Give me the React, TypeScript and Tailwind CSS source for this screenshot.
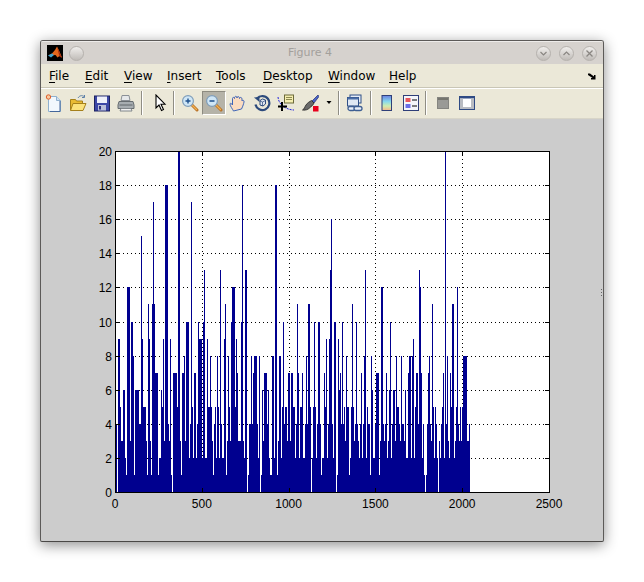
import type { ReactNode } from "react";

const menus = ["File", "Edit", "View", "Insert", "Tools", "Desktop", "Window", "Help"];
const menuWidths = [36, 39, 43, 49, 47, 65, 61, 40];

// one char per pixel column, base 36 bar height, starting at x=115
const levels =
  "4409953366" + "21ccc3aa81" + "666644f955" + "531b931bhb" + "7771226593" + "iii4391077" +
  "775kk31778" + "3aaa24h527" + "724a9992ad" + "2295585314" + "52852d4229" + "b13853accc" +
  "597333ai32" + "dd01448478" + "8842801637" + "7746211882" + "ii138825a4" + "5537737755" +
  "24b7255722" + "484bb5025a" + "524aa41227" + "59249dg42a" + "a019674a45" + "3855125b53" +
  "4a43247248" + "d254418622" + "477713cc43" + "47236a2466" + "3855438443" + "6227882892" +
  "5774dc7241" + "0147843b52" + "5420324572" + "k483275bb2" + "35c4353588883 34".replace(" ", "");

const AX = { l: 115, r: 549, t: 150, b: 491 };
const yOf = (v: number) => AX.b - (v * (AX.b - AX.t)) / 20;
const xOf = (v: number) => AX.l + (v * (AX.r - AX.l)) / 2500;

function Plot() {
  const yTicks = [0, 2, 4, 6, 8, 10, 12, 14, 16, 18, 20];
  const xTicks = [0, 500, 1000, 1500, 2000, 2500];
  let bars = "";
  levels.split("").forEach((c, i) => {
    const h = parseInt(c, 36);
    if (h > 0) bars += `M${AX.l + i} ${AX.b}V${Math.round(yOf(h))}h1V${AX.b}z`;
  });
  return (
    <svg viewBox="41 118 562 423" className="block h-[423px] w-[562px]" shapeRendering="crispEdges">
      <rect x={AX.l} y={AX.t} width={AX.r - AX.l} height={AX.b - AX.t} fill="#fff" />
      {yTicks.slice(1, -1).map((v) => (
        <line key={v} x1={AX.l} x2={AX.r} y1={Math.round(yOf(v)) + 0.5} y2={Math.round(yOf(v)) + 0.5} stroke="#000" strokeDasharray="1 3" />
      ))}
      {xTicks.slice(1, -1).map((v) => (
        <line key={v} y1={AX.t} y2={AX.b} x1={Math.round(xOf(v)) + 0.5} x2={Math.round(xOf(v)) + 0.5} stroke="#000" strokeDasharray="1 3" />
      ))}
      <path d={bars} fill="#00008f" />
      <rect x={AX.l + 0.5} y={AX.t + 0.5} width={AX.r - AX.l} height={AX.b - AX.t} fill="none" stroke="#000" />
      {yTicks.map((v) => (
        <g key={v}>
          <line x1={AX.l} x2={AX.l + 5} y1={Math.round(yOf(v)) + 0.5} y2={Math.round(yOf(v)) + 0.5} stroke="#000" />
          <line x1={AX.r - 4} x2={AX.r} y1={Math.round(yOf(v)) + 0.5} y2={Math.round(yOf(v)) + 0.5} stroke="#000" />
          <text x={112} y={Math.round(yOf(v)) + 5} textAnchor="end" fontSize={12} fill="#000" className="font-['Liberation_Sans',sans-serif]">
            {v}
          </text>
        </g>
      ))}
      {xTicks.map((v) => (
        <g key={v}>
          <line y1={AX.b} y2={AX.b - 4} x1={Math.round(xOf(v)) + 0.5} x2={Math.round(xOf(v)) + 0.5} stroke="#000" />
          <line y1={AX.t} y2={AX.t + 5} x1={Math.round(xOf(v)) + 0.5} x2={Math.round(xOf(v)) + 0.5} stroke="#000" />
          <text x={xOf(v)} y={507} textAnchor="middle" fontSize={12} fill="#000" className="font-['Liberation_Sans',sans-serif]">
            {v}
          </text>
        </g>
      ))}
      <path d="M601 288h1v1h-1zM601 291h1v1h-1zM601 294h1v1h-1z" fill="#666" />
    </svg>
  );
}

function Ico({ children }: { children: ReactNode }) {
  return (
    <svg viewBox="0 0 18 18" className="h-[18px] w-[18px]">
      {children}
    </svg>
  );
}

function Btn({ children, active }: { children: ReactNode; active?: boolean }) {
  return (
    <div
      className={
        active
          ? "flex h-6 w-6 items-center justify-center border border-[#8d8b80] border-r-white border-b-white bg-[#b5b3a8]"
          : "flex h-6 w-6 items-center justify-center"
      }
    >
      {children}
    </div>
  );
}

function Sep({ ml, mr }: { ml: string; mr: string }) {
  return <div className={`h-6 w-[1px] bg-[#8f8d84] shadow-[1px_0_0_#fff] ${ml} ${mr}`} />;
}

const Magnifier = ({ plus }: { plus?: boolean }) => (
  <Ico>
    <path d="M10.5 10.5l5.5 5.5" stroke="#b9742a" strokeWidth="3" strokeLinecap="round" />
    <path d="M11 11l4.5 4.5" stroke="#f4b04e" strokeWidth="1.2" strokeLinecap="round" />
    <circle cx="7" cy="7" r="5.4" fill="#cfe6f6" stroke="#7f9db9" strokeWidth="1.2" />
    <path d={plus ? "M4.5 7h5M7 4.5v5" : "M4.5 7h5"} stroke="#1d4f8c" strokeWidth="1.4" />
  </Ico>
);

function Toolbar() {
  return (
    <div className="flex h-[29px] items-center border-t border-t-white bg-[#ebe8d8] pl-[1px]">
      <Btn>
        <Ico>
          <path d="M3.5 2.5h8l4 4v11h-12z" fill="#f2f8fd" stroke="#8fb0cf" />
          <path d="M11.5 2.5v4h4" fill="#cfe0ef" stroke="#8fb0cf" />
          <path d="M15 7v10.500H5" fill="none" stroke="#45679a" />
          <circle cx="3.500" cy="3" r="2.200" fill="#f7c9a0" stroke="#e0602a" />
        </Ico>
      </Btn>
      <Btn>
        <Ico>
          <path d="M1.500 5.500h5l1 1.500h6v9h-12z" fill="#e9bb33" stroke="#a5801a" />
          <path d="M1.500 16.500l2.500-7h13l-3 7z" fill="#fbe27c" stroke="#a5801a" />
          <path d="M9 4c1.500-2.500 4-3 6-1.500M15.500 1v2.500h-2.500" fill="none" stroke="#5b7fa8" />
        </Ico>
      </Btn>
      <Btn>
        <Ico>
          <rect x="1.500" y="2" width="15" height="15" fill="#3c47a6" stroke="#1d2260" />
          <rect x="4" y="2.500" width="10" height="6.500" fill="#eef0fa" />
          <rect x="5" y="11" width="8" height="5.500" fill="#b9bed9" />
          <rect x="6" y="12" width="2" height="3.500" fill="#2a3080" />
        </Ico>
      </Btn>
      <Btn>
        <Ico>
          <path d="M5 1.500h7l1 5h-9z" fill="#e6e8ea" stroke="#8b9096" />
          <path d="M2 7.500h14l1 3.500v3.500h-16v-3.500z" fill="#a7adb1" stroke="#666c70" />
          <path d="M4 14.500h10l1 2.500h-12z" fill="#f2f2f2" stroke="#80868a" />
          <path d="M2.500 11h13" stroke="#60666a" />
        </Ico>
      </Btn>
      <Sep ml="ml-[3px]" mr="mr-[6px]" />
      <Btn>
        <Ico>
          <path d="M5 1v13l3-3 2.500 5.500 2-1-2.500-5.300h4z" fill="#fff" stroke="#000" strokeWidth="1.100" />
        </Ico>
      </Btn>
      <Sep ml="ml-[1px]" mr="mr-[4px]" />
      <Btn>
        <Magnifier plus />
      </Btn>
      <Btn active>
        <Magnifier />
      </Btn>
      <Btn>
        <Ico>
          <path
            d="M4.500 17c-1-2-3.500-5-3.500-7 0-1 1.500-1 2.500 1V4.500c0-1.500 2-1.500 2 0-.3-2.500 2.500-3 2.500-.5 0-2 2.500-2 2.500.5 0-1.500 2.500-1.500 2.500.5v2c.5-1 2.500-1 2 1-.3 1.500-1 4-2.500 7z"
            fill="#fbdcc0"
            stroke="#3f66b8"
            strokeWidth="1"
          />
        </Ico>
      </Btn>
      <Btn>
        <Ico>
          <path d="M4 4.500a7 7 0 1 1-1.500 6" fill="none" stroke="#2c4a7c" strokeWidth="2.200" />
          <path d="M1 3.500l5.500-.5v5z" fill="#2c4a7c" />
          <path d="M7 6.500l2.500-1.500 3 1v4l-2.500 2-3-1z" fill="#dfe6f0" stroke="#2c4a7c" />
          <path d="M9.500 8v4M9.500 8l3-1.500M9.500 8l-2.500-1" stroke="#2c4a7c" strokeWidth=".7" fill="none" />
        </Ico>
      </Btn>
      <Btn>
        <Ico>
          <rect x="7.500" y="1" width="9" height="8" fill="#f5eeb0" stroke="#6d6a3a" />
          <path d="M9 3.500h6M9 5.500h6" stroke="#8d8a50" />
          <path d="M1 3c.5 4 2 8 8 11 3 1.500 6 2 8 2" fill="none" stroke="#2222dd" strokeDasharray="2 1" />
          <path d="M5 8v9M1 12.500h9" stroke="#000" strokeWidth="2" />
        </Ico>
      </Btn>
      <Btn>
        <Ico>
          <path d="M17 1l-6 6 2 2 5-6.500z" fill="#4a63c8" stroke="#22306f" strokeWidth=".7" />
          <path d="M10.500 6.500L13 9c-1 2.500-3 3.500-4.500 5-1.500 1.500-4 2.500-7 2 2-1 2-3 3.500-5 1.500-2.500 4-3.500 5.500-4.500z" fill="#6a6a6a" stroke="#222" strokeWidth=".8" />
          <rect x="12" y="12" width="5.500" height="5.500" fill="#e8001c" />
        </Ico>
      </Btn>
      <svg viewBox="0 0 10 6" className="ml-[2px] mr-[4px] h-[6px] w-[10px]">
        <path d="M2.500 1h5l-2.500 3z" fill="#000" />
      </svg>
      <Sep ml="ml-0" mr="mr-[4px]" />
      <Btn>
        <Ico>
          <rect x="4" y="1" width="11" height="8" fill="#e6edf6" stroke="#2f4f86" />
          <rect x="1.500" y="3.500" width="11" height="8.500" fill="#dfe8f3" stroke="#2f4f86" />
          <rect x="1.500" y="3.500" width="11" height="2" fill="#4a6ea8" />
          <rect x="2" y="12.500" width="7" height="4" rx="2" fill="#e8eef6" stroke="#3e5f92" strokeWidth="1.300" />
          <rect x="8" y="12.500" width="8" height="4" rx="2" fill="#e8eef6" stroke="#3e5f92" strokeWidth="1.300" />
        </Ico>
      </Btn>
      <Sep ml="ml-[3px]" mr="mr-[4px]" />
      <Btn>
        <Ico>
          <defs>
            <linearGradient id="cbar" x1="0" y1="0" x2="0" y2="1">
              <stop offset="0" stopColor="#6a7fe0" />
              <stop offset=".4" stopColor="#86d8ee" />
              <stop offset=".7" stopColor="#cfeeb0" />
              <stop offset="1" stopColor="#f6b48c" />
            </linearGradient>
          </defs>
          <rect x="4" y="1.500" width="9.500" height="15" fill="url(#cbar)" stroke="#2f3f78" />
        </Ico>
      </Btn>
      <Btn>
        <Ico>
          <rect x="1.500" y="1.500" width="15" height="15" fill="#f4f6fa" stroke="#2f3f78" />
          <rect x="3.500" y="4" width="5" height="4" fill="#e8585c" />
          <rect x="3.500" y="10" width="5" height="4" fill="#6a6fe8" />
          <path d="M10 6h5M10 12h5" stroke="#000" />
        </Ico>
      </Btn>
      <Sep ml="ml-[2px]" mr="mr-[5px]" />
      <Btn>
        <Ico>
          <rect x="3.500" y="3.500" width="11" height="11" fill="#9a9a96" stroke="#858580" />
          <rect x="4" y="4" width="10" height="2" fill="#75756f" />
        </Ico>
      </Btn>
      <Btn>
        <Ico>
          <rect x="1.500" y="2.500" width="15" height="13" fill="#fff" stroke="#2f4a84" />
          <rect x="1.500" y="2.500" width="15" height="2" fill="#2f4a84" />
          <rect x="2" y="4.500" width="3" height="10.500" fill="#b9bcc2" />
          <rect x="13" y="4.500" width="3" height="10.500" fill="#b9bcc2" />
          <rect x="2" y="13" width="14" height="2" fill="#b9bcc2" />
        </Ico>
      </Btn>
    </div>
  );
}

function WinBtn({ children }: { children?: ReactNode }) {
  return (
    <div className="flex h-[15px] w-[15px] items-center justify-center rounded-full border border-[#b5b1ad] bg-gradient-to-b from-[#f0eeec] to-[#c0bcb8]">
      {children && (
        <svg viewBox="0 0 9 9" className="h-[9px] w-[9px]">
          {children}
        </svg>
      )}
    </div>
  );
}

function TitleBar() {
  return (
    <div className="flex h-[23px] items-center border-t border-t-[#eeecea] bg-[#d6d2ce] pl-[6px] pr-[6px]">
      <svg viewBox="0 0 16 16" className="h-4 w-4 bg-black">
        <path d="M1 10.500l4-2 3-3.500 2-3.500 2 4 3 7-2.500-1.500-2 1.500-2-2.500z" fill="#e2671c" />
        <path d="M1 10.500l4-2 2 1.500-3 2.500z" fill="#3fa3cf" />
        <path d="M10 2l2 4 3 7-2.500-1.500z" fill="#a32c12" />
      </svg>
      <div className="ml-[6px]">
        <WinBtn />
      </div>
      <div className="flex-1 text-center font-['DejaVu_Sans',sans-serif] text-[11px] text-[#a3a09c]">Figure 4</div>
      <div className="flex gap-[8px]">
        <WinBtn>
          <path d="M1.500 3l3 3 3-3" fill="none" stroke="#8a8682" strokeWidth="1.200" />
        </WinBtn>
        <WinBtn>
          <path d="M1.500 6l3-3 3 3" fill="none" stroke="#8a8682" strokeWidth="1.200" />
        </WinBtn>
        <WinBtn>
          <path d="M1.500 1.500l6 6M7.500 1.500l-6 6" stroke="#8a8682" strokeWidth="1.300" />
        </WinBtn>
      </div>
    </div>
  );
}

function MenuBar() {
  return (
    <div className="flex h-[24px] items-center border-b border-b-[#c9c6b6] bg-[#ebe8d8] pl-[8px] pr-[7px] font-['DejaVu_Sans',sans-serif] text-[12px] text-black">
      {menus.map((m, i) => (
        <div key={m} style={{ width: menuWidths[i] }}>
          <span className="underline decoration-1 underline-offset-2 [text-decoration-skip-ink:none]">{m[0]}</span>
          {m.slice(1)}
        </div>
      ))}
      <svg viewBox="0 0 8 8" className="ml-auto h-2 w-2">
        <path d="M0 1.500h2l4 3V3h1.500v4.500H3V6h1.500L0 3z" fill="#000" />
      </svg>
    </div>
  );
}

export default function App() {
  return (
    <div className="h-[582px] w-[644px] bg-white pl-10 pt-10">
      <div className="h-[502px] w-[564px] overflow-hidden rounded-t-[3px] rounded-b-[2px] border border-[#5c5a58] border-b-[#4a4846] bg-[#cccccc] shadow-[0_3px_14px_rgba(0,0,0,0.45)]">
        <TitleBar />
        <MenuBar />
        <Toolbar />
        <div className="h-[2px] border-b border-b-[#d8d5c8] bg-[#ebe8d8]" />
        <Plot />
      </div>
    </div>
  );
}
